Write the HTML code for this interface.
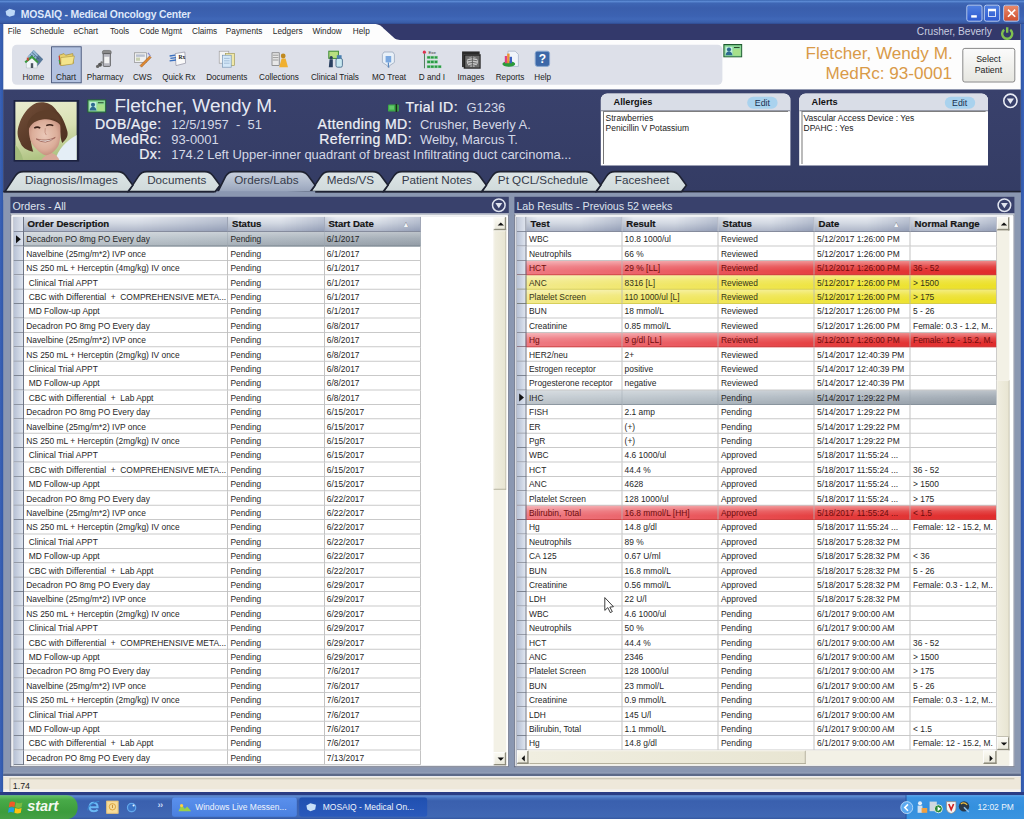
<!DOCTYPE html>
<html><head><meta charset="utf-8">
<style>
html,body{margin:0;padding:0;overflow:hidden;background:#8996b0;}
body{width:1024px;height:819px;position:relative;}
#root{position:absolute;left:0;top:0;width:1280px;height:1024px;transform:scale(0.8);transform-origin:0 0;font-family:"Liberation Sans",sans-serif;overflow:hidden;background:#8a97b1;}
.abs{position:absolute;}
/* title bar */
#title{left:0;top:0;width:1280px;height:30px;background:linear-gradient(#3a66b0 0px,#5a88d2 1.9px,#3e66b4 4px,#3a5eac 10px,#3c62b2 20px,#4068b8 24px,#3a5ea8 28px,#2e4a90 30px);}
#title .t{left:26px;top:10px;color:#dfe8fa;font-weight:bold;font-size:13px;letter-spacing:-0.25px;}
#lb{left:0;top:30px;width:4px;height:964px;background:linear-gradient(90deg,#3a62b8,#3058a8);}
#rb{left:1276px;top:30px;width:4px;height:964px;background:linear-gradient(90deg,#3058a8,#3a62b8);}
#bb{left:0;top:989.5px;width:1280px;height:4.5px;background:#2a3c84;}
.tbtn{top:6px;width:20px;height:21px;border:1px solid #cfe0ff;border-radius:3px;box-sizing:border-box;background:linear-gradient(#4f7fe0,#2e5ad0);}
#menu{left:4px;top:30px;width:1272px;height:82px;background:#fdfdfd;}
#menu .m{top:36px;font-size:10.3px;color:#2a2a2a;}
#toolbar{left:14.5px;top:55.5px;width:888px;height:50.5px;background:#dde0e9;border-radius:6px;}
.tl{position:absolute;top:90px;font-size:10.2px;color:#222;transform:translateX(-50%);white-space:nowrap;}
/* patient header */
#ph{left:4px;top:112px;width:1272px;height:128px;background:linear-gradient(#39416c,#343c64);}
.lbl{position:absolute;color:#eef0f6;font-size:17.6px;font-weight:normal;-webkit-text-stroke:0.3px #eef0f6;letter-spacing:0.5px;white-space:nowrap;}
.val{position:absolute;color:#d4d8e6;font-size:16.2px;white-space:nowrap;}
.box{position:absolute;background:#fff;border-radius:8px 8px 0 0;overflow:hidden;}
.box .hd{position:absolute;left:0;top:0;right:0;height:21px;background:#d9dde7;border-bottom:1px solid #6c7080;}
.box .ttl{position:absolute;left:16px;top:4px;font-weight:bold;font-size:11.5px;color:#111;}
.box .edit{position:absolute;top:4px;width:38px;height:15px;border-radius:8px;background:#a9d2ee;font-size:11px;color:#1a3050;text-align:center;line-height:15px;}
.box .in{position:absolute;left:3px;top:22px;right:3px;bottom:2px;border-left:1.5px solid #555;border-top:1.5px solid #666;font-size:10.6px;color:#222;line-height:13px;padding:1px 0 0 2px;}
/* tabs */
#tabs{left:0;top:205px;}
.tabt{position:absolute;top:217.4px;font-size:14.6px;color:#353b4a;white-space:nowrap;}
/* panels */
.phd{position:absolute;top:246px;height:21px;background:#39416c;}
.phd .pt{position:absolute;left:3px;top:4.4px;color:#dde1ee;font-size:13.4px;white-space:nowrap;}
.grid{position:absolute;top:267px;height:692px;background:#fff;border-top:2px solid #bfc4cc;border-left:1.25px solid #454c64;border-bottom:1.25px solid #454c64;border-right:1.25px solid #6a7288;box-sizing:border-box;}
.gin{position:absolute;top:270.5px;height:686px;overflow:hidden;background:#fff;box-shadow:-1px 0 0 #a4abb8;}
.ghd{position:absolute;left:0;top:0;height:19.5px;display:flex;}
.ghd .h{height:19.5px;flex:none;box-sizing:border-box;border-right:1px solid #8890a4;border-bottom:1px solid #6c7488;background:linear-gradient(90deg,rgba(40,60,100,0.10),rgba(255,255,255,0) 12%,rgba(255,255,255,0) 55%,rgba(40,60,110,0.20) 100%),linear-gradient(#e8ebf2,#d2d8e2 45%,#aeb6c8);font-weight:bold;font-size:12px;color:#141414;-webkit-text-stroke:0.25px #141414;padding-left:5px;line-height:19.5px;white-space:nowrap;position:relative;}
.ghd .rhh{width:13px;padding:0;border-right:1.5px solid #4c5468;background:linear-gradient(90deg,#c0c8d8,#dfe4ee);}
.rows{position:absolute;left:0;top:19.5px;}
.row{display:flex;height:18px;}
.row .rh{width:13px;height:18px;box-sizing:border-box;border-right:1.5px solid #4c5468;border-bottom:1px solid #606878;background:linear-gradient(90deg,#b6c0d4,#dfe5ef);position:relative;flex:none;}
.row .c{height:18px;box-sizing:border-box;border-right:1px solid #b4b4b4;border-bottom:1px solid #bcbcbc;font-size:10.5px;color:#262626;line-height:18px;padding-left:3px;white-space:pre;overflow:hidden;flex:none;}
.row.sel{background:linear-gradient(rgba(255,255,255,0.35),rgba(255,255,255,0.1) 45%,rgba(0,0,0,0.06) 100%),linear-gradient(90deg,#c4ccd2,#b4bec6 40%,#a2acb6 80%,#9aa4ae);}
.row.sel .c{background:transparent;border-bottom-color:#7a8690;border-right-color:rgba(150,160,170,0.5);}
.row.red{background:linear-gradient(rgba(255,255,255,0.45),rgba(255,255,255,0.12) 40%,rgba(255,255,255,0) 70%),linear-gradient(90deg,#ee7c84,#ea5a60 35%,#e43a3a 70%,#e02c2c);}
.row.red .c{background:transparent;color:#6e0c0c;border-bottom-color:#c84040;}
.row.yel{background:linear-gradient(rgba(255,255,255,0.4),rgba(255,255,255,0.1) 40%,rgba(255,255,255,0) 70%),linear-gradient(90deg,#f2ea90,#f0e660 35%,#eee43a 70%,#ece028);}
.row.yel .c{background:transparent;color:#34341a;border-bottom-color:#d0c850;}
.arr{position:absolute;left:3px;top:4px;width:0;height:0;border-top:5px solid transparent;border-bottom:5px solid transparent;border-left:6px solid #111;}
.vsb{position:absolute;width:16px;background:#f3f1e6;}
.sbtn{position:absolute;left:0;width:16px;height:17px;box-sizing:border-box;background:linear-gradient(#fbfaf3,#ebe9dc);border-top:1px solid #fff;border-left:1px solid #fff;border-right:2px solid #8e8c7c;border-bottom:2px solid #8e8c7c;}
.thumb{position:absolute;left:0;width:16px;box-sizing:border-box;background:linear-gradient(90deg,#f0eee0,#e8e5d2);border:1px solid #f4f2e8;border-right:1.5px solid #a6a28c;border-bottom:1.5px solid #a6a28c;}
#status{left:4px;top:970px;width:1272px;height:19.5px;background:linear-gradient(#eee8da 80%,#f4f2f0 85%);border-top:1px solid #fff;box-sizing:border-box;}
#taskbar{left:0;top:994px;width:1280px;height:30px;background:linear-gradient(#4a78c4 0,#5a88d0 1.5px,#4a74c0 3.5px,#3a60ae 7px,#3c62b0 50%,#4068b4 90%,#34569e 100%);}
</style></head><body>
<div id="root">
<!-- title bar -->
<div id="title" class="abs">
  <svg class="abs" style="left:6px;top:10px" width="14" height="12" viewBox="0 0 14 12"><path d="M1 4 L6 1 L13 3 L12 9 L6 11 L2 9 Z" fill="#bcd8f8"/></svg>
  <div class="abs t">MOSAIQ - Medical Oncology Center</div>
  <div class="abs tbtn" style="left:1207.5px;"><div class="abs" style="left:5px;top:12px;width:7px;height:3px;background:#fff"></div></div>
  <div class="abs tbtn" style="left:1230px;"><div class="abs" style="left:4px;top:4px;width:10px;height:10px;border:1px solid #fff;border-top:3px solid #fff;box-sizing:border-box"></div></div>
  <div class="abs tbtn" style="left:1253.5px;background:linear-gradient(#e88a6c,#d05030);"><svg class="abs" style="left:3px;top:3px" width="13" height="13"><path d="M2 2 L11 11 M11 2 L2 11" stroke="#fff" stroke-width="2"/></svg></div>
</div>
<div id="menu" class="abs">
  <svg class="abs" style="left:0;top:0" width="1272" height="20"><path d="M463 0 C 471 0, 473 3, 477 7 L 486 15 C 490 19, 492 20, 498 20 L1272 20 L1272 0 Z" fill="#33396b"/></svg>
  <div class="abs m" style="left:5.75px;top:3.6px">File</div>
  <div class="abs m" style="left:33.5px;top:3.6px">Schedule</div>
  <div class="abs m" style="left:87.75px;top:3.6px">eChart</div>
  <div class="abs m" style="left:133.5px;top:3.6px">Tools</div>
  <div class="abs m" style="left:170.4px;top:3.6px">Code Mgmt</div>
  <div class="abs m" style="left:236px;top:3.6px">Claims</div>
  <div class="abs m" style="left:278.25px;top:3.6px">Payments</div>
  <div class="abs m" style="left:337px;top:3.6px">Ledgers</div>
  <div class="abs m" style="left:386.6px;top:3.6px">Window</div>
  <div class="abs m" style="left:437px;top:3.6px">Help</div>
  <div class="abs" style="left:1142px;top:3.1px;font-size:12.7px;color:#c9cde0;">Crusher, Beverly</div>
  <svg class="abs" style="left:1246px;top:3px" width="18" height="17" viewBox="0 0 18 17"><path d="M5.2 4.2 A6.3 6.3 0 1 0 12.8 4.2" fill="none" stroke="#80c050" stroke-width="3"/><path d="M9 1 V8" stroke="#80c050" stroke-width="3"/></svg>
  <!-- right patient -->
  <div class="abs" style="left:1003px;top:25px;font-size:21.4px;color:#d99a48;white-space:nowrap">Fletcher, Wendy M.</div>
  <div class="abs" style="left:1028px;top:50px;font-size:21.4px;color:#d99a48;white-space:nowrap">MedRc: 93-0001</div>
  <div class="abs" style="left:1198.5px;top:30px;width:66px;height:43px;box-sizing:border-box;border:1px solid #6a6a6a;border-radius:3px;background:linear-gradient(#fbfbfb,#e6e6e0);font-size:11px;color:#222;text-align:center;line-height:13px;padding-top:7px">Select<br>Patient</div>
  <svg class="abs" style="left:900px;top:24.5px" width="24" height="17" viewBox="0 0 24 17"><rect x="0.75" y="0.75" width="22.5" height="15.5" fill="#8ad898" stroke="#1e5a30" stroke-width="1.5"/><rect x="3" y="3.5" width="8.5" height="10.5" fill="#c4f0dc"/><circle cx="7.25" cy="7" r="2.6" fill="#2e6a90"/><path d="M3 14 Q3.5 9.5 7.25 9.5 Q11 9.5 11.5 14 Z" fill="#2e6a90"/><rect x="12.5" y="6.5" width="9" height="8" fill="#a8e08a"/><path d="M13.5 4.5 H20.5" stroke="#2a4a2a" stroke-width="1.3"/></svg>
</div>
<div id="toolbar" class="abs">
<div class="abs" style="left:49.25px;top:2.3999999999999986px;width:38px;height:46px;box-sizing:border-box;background:#b3c2e0;border:1.5px solid #3d4a6c;"></div>
<svg class="abs" style="left:15.2px;top:6.0px" width="24" height="24" viewBox="0 0 24 24"><path d="M12 0.5 L24 12 L15 23 L4.5 9 Z" fill="#58789a"/><path d="M12 0.5 L4.5 9 L11 17 L17.5 7 Z" fill="#94b8d4"/><path d="M8 6 L15 13 M10 3.5 L19 12 M7 10 L11 7 M9 13 L14 8 M12 16 L17 11" stroke="#3a5a78" stroke-width="0.9"/><path d="M3 15.5 L10 10 L16.5 15.5 L16.5 23 L3 23 Z" fill="#f0f4f8" stroke="#9aa" stroke-width="0.5"/><path d="M1.5 16 L10 9 L17.5 16" fill="none" stroke="#3a9a40" stroke-width="2.6"/><rect x="3.5" y="10" width="2.5" height="4" fill="#c04a38"/><rect x="8.5" y="17" width="3" height="6" fill="#4a5560"/></svg>
<div class="tl" style="left:27.2px;top:35.5px">Home</div>
<svg class="abs" style="left:56.0px;top:6.0px" width="24" height="24" viewBox="0 0 24 24"><path d="M3 7 L9 5 L11 7 L20 5 L21 17 L5 20 Z" fill="#e8d070" stroke="#a08830" stroke-width="0.8"/><path d="M5 10 L22 8 L20 18 L5 20 Z" fill="#f4e48c" stroke="#b09a40" stroke-width="0.8"/><path d="M3 8 L4 19" stroke="#d04030" stroke-width="1.5"/><path d="M3 13 L4 18" stroke="#40a040" stroke-width="1.5"/></svg>
<div class="tl" style="left:68.0px;top:35.5px">Chart</div>
<svg class="abs" style="left:104.8px;top:6.0px" width="24" height="24" viewBox="0 0 24 24"><rect x="9" y="1" width="11" height="5" rx="2" fill="#8a8a8a" stroke="#444" stroke-width="0.6"/><rect x="10" y="5" width="9" height="16" rx="1" fill="#b8b8c0" stroke="#333" stroke-width="0.8"/><rect x="11.5" y="9" width="6" height="8" fill="#f4f4f4"/><circle cx="6" cy="19" r="2.5" fill="#555"/><circle cx="3" cy="21" r="2" fill="#666"/><circle cx="8" cy="16" r="1.5" fill="#777"/></svg>
<div class="tl" style="left:116.8px;top:35.5px">Pharmacy</div>
<svg class="abs" style="left:151.5px;top:6.0px" width="24" height="24" viewBox="0 0 24 24"><rect x="2" y="4" width="15" height="12" fill="#f0f0f0" stroke="#888" stroke-width="0.8"/><rect x="4" y="6" width="11" height="3" fill="#b8c0d0"/><rect x="4" y="10" width="5" height="4" fill="#c8d0b0"/><path d="M9 20 L21 8 L23 10 L11 22 Z" fill="#e08a30" stroke="#905020" stroke-width="0.6"/><path d="M19 4 L22 8" stroke="#8888cc" stroke-width="1.5"/></svg>
<div class="tl" style="left:163.5px;top:35.5px">CWS</div>
<svg class="abs" style="left:196.9px;top:6.0px" width="24" height="24" viewBox="0 0 24 24"><path d="M8 5 L20 3 L21 17 L9 20 Z" fill="#fafafa" stroke="#889" stroke-width="0.8"/><text x="12" y="12" font-size="7" font-family="Liberation Serif" font-weight="bold" fill="#222">Rx</text><path d="M1 8 L8 7 M2 11 L9 10 M1 14 L9 13" stroke="#3a70c0" stroke-width="1.6"/></svg>
<div class="tl" style="left:208.9px;top:35.5px">Quick Rx</div>
<svg class="abs" style="left:257.0px;top:6.0px" width="24" height="24" viewBox="0 0 24 24"><rect x="2" y="2" width="12" height="15" fill="#f4f4f4" stroke="#999" stroke-width="0.8"/><rect x="10" y="5" width="11" height="15" fill="#f0e8a8" stroke="#a09850" stroke-width="0.8"/><rect x="6" y="7" width="11" height="15" fill="#d4e8f8" stroke="#7090b0" stroke-width="0.8"/><path d="M8 11 H15 M8 14 H15 M8 17 H15" stroke="#8aa8c8" stroke-width="0.8"/></svg>
<div class="tl" style="left:269.0px;top:35.5px">Documents</div>
<svg class="abs" style="left:322.2px;top:6.0px" width="24" height="24" viewBox="0 0 24 24"><rect x="3" y="4" width="9" height="16" fill="#e8e8e8" stroke="#666" stroke-width="0.8"/><path d="M4 7 H11 M4 10 H11 M4 13 H11" stroke="#888" stroke-width="1"/><circle cx="17" cy="8" r="3" fill="#c08a20"/><path d="M12 22 L15 11 L20 11 L23 22 Z" fill="#f0b030"/></svg>
<div class="tl" style="left:334.2px;top:35.5px">Collections</div>
<svg class="abs" style="left:392.2px;top:6.0px" width="24" height="24" viewBox="0 0 24 24"><rect x="4" y="2" width="12" height="9" fill="#b8e080" stroke="#3a8a30" stroke-width="1.2"/><circle cx="7" cy="10" r="2" fill="#2a4060"/><path d="M5 12 L9 12 L9 22 L4 22 Z" fill="#2a4060"/><rect x="13" y="11" width="8" height="11" rx="2" fill="#c8e8f0" stroke="#3a6080" stroke-width="1"/><rect x="14" y="7" width="6" height="4" fill="#4a80b0"/></svg>
<div class="tl" style="left:404.2px;top:35.5px">Clinical Trials</div>
<svg class="abs" style="left:459.8px;top:6.0px" width="24" height="24" viewBox="0 0 24 24"><path d="M6 3 L17 3 L19 6 L19 16 L13 20 L12 23 L10 20 L4 16 L4 6 Z" fill="#e8f0f8" stroke="#8898b0" stroke-width="0.8"/><rect x="8" y="8" width="7" height="8" fill="#7aa8e0"/><path d="M11.5 16 V22" stroke="#5a88c0" stroke-width="1.5"/></svg>
<div class="tl" style="left:471.8px;top:35.5px">MO Treat</div>
<svg class="abs" style="left:513.5px;top:6.0px" width="24" height="24" viewBox="0 0 24 24"><circle cx="2.4" cy="3.2" r="2.1" fill="#e03050"/><text x="7.5" y="5.6" font-size="5.5" font-family="Liberation Sans" fill="#333">Exe</text><path d="M2.6 5 V23.5" stroke="#2a6a3a" stroke-width="1"/><rect x="5.8" y="8.1" width="4" height="3.4" fill="#2a9a44" stroke="#9ad8a8" stroke-width="0.5"/><rect x="10.4" y="8.1" width="4" height="3.4" fill="#2a9a44" stroke="#9ad8a8" stroke-width="0.5"/><rect x="15.0" y="8.1" width="4" height="3.4" fill="#2a9a44" stroke="#9ad8a8" stroke-width="0.5"/><rect x="5.8" y="13.6" width="4" height="3.4" fill="#2a9a44" stroke="#9ad8a8" stroke-width="0.5"/><rect x="10.4" y="13.6" width="4" height="3.4" fill="#2a9a44" stroke="#9ad8a8" stroke-width="0.5"/><rect x="15.0" y="13.6" width="4" height="3.4" fill="#2a9a44" stroke="#9ad8a8" stroke-width="0.5"/><rect x="5.8" y="19.6" width="4" height="3.4" fill="#2a9a44" stroke="#9ad8a8" stroke-width="0.5"/><rect x="10.4" y="19.6" width="4" height="3.4" fill="#2a9a44" stroke="#9ad8a8" stroke-width="0.5"/><rect x="15.0" y="19.6" width="4" height="3.4" fill="#2a9a44" stroke="#9ad8a8" stroke-width="0.5"/><rect x="19.6" y="19.6" width="4" height="3.4" fill="#2a9a44" stroke="#9ad8a8" stroke-width="0.5"/></svg>
<div class="tl" style="left:525.5px;top:35.5px">D and I</div>
<svg class="abs" style="left:562.2px;top:6.0px" width="24" height="24" viewBox="0 0 24 24"><rect x="0.6" y="2.3" width="22" height="19.6" fill="#2a2a2a"/><rect x="2.9" y="5.9" width="21" height="18.2" fill="#1a1a1a" stroke="#555" stroke-width="0.6"/><rect x="4.5" y="7.5" width="18" height="15" fill="#6a6a6a"/><ellipse cx="13.5" cy="15" rx="7" ry="6.5" fill="#c8c8c8"/><path d="M13.5 8 V22 M8 11 Q13.5 9 19 11 M7.5 14 Q13.5 12 19.5 14 M8 17 Q13.5 15 19 17 M9 20 Q13.5 18 18 20" stroke="#4a4a4a" stroke-width="0.9" fill="none"/></svg>
<div class="tl" style="left:574.2px;top:35.5px">Images</div>
<svg class="abs" style="left:611.0px;top:6.0px" width="24" height="24" viewBox="0 0 24 24"><path d="M9 2 L18 2 L22 6 L22 21 L9 21 Z" fill="#f0f4fa" stroke="#9aa8c0" stroke-width="0.8"/><ellipse cx="10" cy="18" rx="8" ry="3.5" fill="#2a9a3a"/><rect x="5" y="8" width="3" height="9" fill="#e04080"/><rect x="8" y="5" width="3" height="12" fill="#f09030"/><rect x="11" y="9" width="3" height="8" fill="#3a60c0"/></svg>
<div class="tl" style="left:623.0px;top:35.5px">Reports</div>
<svg class="abs" style="left:651.9px;top:6.0px" width="24" height="24" viewBox="0 0 24 24"><rect x="3" y="2" width="18" height="19" rx="3" fill="#3c68a8" stroke="#8aa8d0" stroke-width="1.2"/><text x="12" y="17" font-size="15" text-anchor="middle" font-family="Liberation Sans" font-weight="bold" fill="#fff">?</text></svg>
<div class="tl" style="left:663.9px;top:35.5px">Help</div>
</div>
<div id="lb" class="abs"></div><div id="rb" class="abs"></div>

<!-- patient header -->
<div id="ph" class="abs">
  <div class="abs" style="left:13px;top:12.5px;width:81.5px;height:77.5px;background:#1c2240;"></div>
  <svg class="abs" style="left:15px;top:15px" width="77" height="73" viewBox="0 0 61.5 59.4" preserveAspectRatio="none">
<defs><linearGradient id="bgp" x1="0" y1="0" x2="0.2" y2="1"><stop offset="0" stop-color="#eaeccf"/><stop offset="0.55" stop-color="#d8e0b4"/><stop offset="1" stop-color="#b0c484"/></linearGradient>
<radialGradient id="face" cx="0.5" cy="0.45" r="0.6"><stop offset="0" stop-color="#eac8b8"/><stop offset="0.65" stop-color="#dcae9a"/><stop offset="1" stop-color="#c08878"/></radialGradient>
<linearGradient id="hair" x1="0" y1="0" x2="1" y2="1"><stop offset="0" stop-color="#74503a"/><stop offset="0.5" stop-color="#5a3a28"/><stop offset="1" stop-color="#4a2e20"/></linearGradient></defs>
<rect width="61.5" height="59.4" fill="url(#bgp)"/>
<path d="M0 44 Q6 50 8 59.4 L0 59.4 Z" fill="#a4bc7c"/>
<path d="M40 59.4 Q44 44 61.5 34 L61.5 59.4 Z" fill="#e4eef6"/>
<path d="M26 59.4 Q30 54 36 52 Q42 54 44 59.4 Z" fill="#d8a898"/>
<path d="M21 1.3 C28 0 36 0.5 42 10 C46 14 49 19 52 30 C53 34 52 38 47 42 C45 38 45 30 44 24 L16 24 C14 34 16 44 18 51 C12 50 6 46 5 41 C2 36 1.5 30 4 23 C6 16 12 5 21 1.3 Z" fill="url(#hair)"/>
<path d="M14 22 C13 30 14 38 17 43 C21 49 27 54 31 54.5 C36 54 41 49 43 45 C45 40 45.5 32 45 24 C40 17 22 16 14 22 Z" fill="url(#face)"/>
<path d="M12 24 C14 14 24 8 34 9 C42 10 46 16 46 26 C44 20 40 17 36 17 C30 17.5 24 18 19 21 C16 23 14 26 13 30 Z" fill="#5e3e2a"/>
<path d="M19 27 Q22 25 25 27" stroke="#3a2018" stroke-width="1.6" fill="none"/>
<path d="M31 24.5 Q34.5 22.5 38 24.5" stroke="#3a2018" stroke-width="1.6" fill="none"/>
<path d="M30 27 Q29 32 31 34" stroke="#b88070" stroke-width="0.7" fill="none"/>
<path d="M21 38 Q30 45 40 36.5 Q31 41 21 38 Z" fill="#f8f4f0" stroke="#8a4a40" stroke-width="0.7"/>
</svg>
  <svg class="abs" style="left:105px;top:12px" width="24" height="17" viewBox="0 0 24 17"><rect x="0.75" y="0.75" width="22.5" height="15.5" fill="#8ad898" stroke="#1e5a30" stroke-width="1.5"/><rect x="3" y="3.5" width="8.5" height="10.5" fill="#c4f0dc"/><circle cx="7.25" cy="7" r="2.6" fill="#2e6a90"/><path d="M3 14 Q3.5 9.5 7.25 9.5 Q11 9.5 11.5 14 Z" fill="#2e6a90"/><rect x="12.5" y="6.5" width="9" height="8" fill="#a8e08a"/><path d="M13.5 4.5 H20.5" stroke="#2a4a2a" stroke-width="1.3"/></svg>
  <div class="abs" style="left:139px;top:7.3px;font-size:23.7px;color:#e6e9f3;white-space:nowrap">Fletcher, Wendy M.</div>
  <div class="lbl" style="right:1074px;top:33.4px">DOB/Age:</div>
  <div class="lbl" style="right:1074px;top:52px">MedRc:</div>
  <div class="lbl" style="right:1074px;top:71.4px">Dx:</div>
  <div class="val" style="left:210px;top:34.3px">12/5/1957&nbsp; - &nbsp;51</div>
  <div class="val" style="left:210px;top:52.9px">93-0001</div>
  <div class="val" style="left:210px;top:72.3px">174.2 Left Upper-inner quadrant of breast Infiltrating duct carcinoma...</div>
  <svg class="abs" style="left:481px;top:17.5px" width="14" height="10" viewBox="0 0 14 10"><rect x="0" y="0.5" width="13.5" height="9" rx="1.5" fill="#3eaa48"/><rect x="9.5" y="0" width="2" height="10" fill="#1a2a1a"/><rect x="1.5" y="2" width="6" height="5" fill="#62c86a"/></svg>
  <div class="lbl" style="left:503px;top:12.4px">Trial ID:</div>
  <div class="val" style="left:579px;top:13.3px">G1236</div>
  <div class="lbl" style="right:761px;top:33.4px">Attending MD:</div>
  <div class="lbl" style="right:761px;top:52.4px">Referring MD:</div>
  <div class="val" style="left:521px;top:34.3px">Crusher, Beverly A.</div>
  <div class="val" style="left:521px;top:53.3px">Welby, Marcus T.</div>

  <div class="box" style="left:747px;top:4.5px;width:236.5px;height:90px;">
    <div class="hd"></div><div class="ttl">Allergies</div><div class="edit" style="left:183px">Edit</div>
    <div class="in">Strawberries<br>Penicillin V Potassium</div>
  </div>
  <div class="box" style="left:994.5px;top:4.5px;width:236px;height:90px;">
    <div class="hd"></div><div class="ttl">Alerts</div><div class="edit" style="left:182px">Edit</div>
    <div class="in">Vascular Access Device : Yes<br>DPAHC : Yes</div>
  </div>
  <svg class="abs" style="left:1249px;top:4px" width="20" height="20" viewBox="0 0 20 20"><circle cx="10" cy="10" r="8.3" fill="#39416c" stroke="#e8ebf4" stroke-width="2"/><path d="M5.5 7 L14.5 7 L10 14 Z" fill="#e8ebf4"/></svg>
</div>

<!-- tabs -->
<svg class="abs" style="left:0;top:205px" width="1280" height="45" viewBox="0 0 1280 45"><defs><linearGradient id="tsel" x1="0" y1="0" x2="0" y2="1"><stop offset="0" stop-color="#c9d1de"/><stop offset="0.55" stop-color="#a9b4c8"/><stop offset="1" stop-color="#8b97b1"/></linearGradient><linearGradient id="tun" x1="0" y1="0" x2="0" y2="1"><stop offset="0" stop-color="#dde5e6"/><stop offset="1" stop-color="#d0dadb"/></linearGradient></defs>
<rect x="4" y="34.5" width="1272" height="10.5" fill="#8a97b1"/><rect x="4" y="33.5" width="1272" height="2" fill="#1e2232"/>
<path d="M745.5,34.5 L758.0,15.5 Q761.5,9.5 768.5,9.5 L839,9.5 Q845.5,9.5 849,14.5 L858,26.5 L852,34.5 Z" fill="url(#tun)" stroke="#1e2232" stroke-width="2"/>
<path d="M602.5,34.5 L615.0,15.5 Q618.5,9.5 625.5,9.5 L732,9.5 Q738.5,9.5 742,14.5 L751,26.5 L745,34.5 Z" fill="url(#tun)" stroke="#1e2232" stroke-width="2"/>
<path d="M479.5,34.5 L492.0,15.5 Q495.5,9.5 502.5,9.5 L589,9.5 Q595.5,9.5 599,14.5 L608,26.5 L602,34.5 Z" fill="url(#tun)" stroke="#1e2232" stroke-width="2"/>
<path d="M388.5,34.5 L401.0,15.5 Q404.5,9.5 411.5,9.5 L466,9.5 Q472.5,9.5 476,14.5 L485,26.5 L479,34.5 Z" fill="url(#tun)" stroke="#1e2232" stroke-width="2"/>
<path d="M269.5,40.5 L282.0,15.5 Q285.5,9.5 292.5,9.5 L375,9.5 Q381.5,9.5 385,14.5 L394,26.5 L388,34.5 Z" fill="url(#tsel)" stroke="#1e2232" stroke-width="2"/>
<rect x="267.5" y="34" width="126.5" height="8" fill="#8b97b1"/>
<path d="M160.5,34.5 L173.0,15.5 Q176.5,9.5 183.5,9.5 L256,9.5 Q262.5,9.5 266,14.5 L275,26.5 L269,34.5 Z" fill="url(#tun)" stroke="#1e2232" stroke-width="2"/>
<path d="M6.25,34.5 L18.75,15.5 Q22.25,9.5 29.25,9.5 L147,9.5 Q153.5,9.5 157,14.5 L166,26.5 L160,34.5 Z" fill="url(#tun)" stroke="#1e2232" stroke-width="2"/>
</svg>
<div class="tabt" style="left:89.4px;transform:translateX(-50%)">Diagnosis/Images</div>
<div class="tabt" style="left:220.9px;transform:translateX(-50%)">Documents</div>
<div class="tabt" style="left:333px;transform:translateX(-50%)">Orders/Labs</div>
<div class="tabt" style="left:438px;transform:translateX(-50%)">Meds/VS</div>
<div class="tabt" style="left:546px;transform:translateX(-50%)">Patient Notes</div>
<div class="tabt" style="left:678.7px;transform:translateX(-50%)">Pt QCL/Schedule</div>
<div class="tabt" style="left:802.6px;transform:translateX(-50%)">Facesheet</div>

<!-- orders panel -->
<div class="phd" style="left:12.5px;width:623.5px">
  <div class="pt">Orders - All</div>
  <svg class="abs" style="left:601px;top:1px" width="19" height="19" viewBox="0 0 20 20"><circle cx="10" cy="10" r="8.3" fill="#39416c" stroke="#dfe3ee" stroke-width="2"/><path d="M5.5 7 L14.5 7 L10 14 Z" fill="#dfe3ee"/></svg>
</div>
<div class="grid" style="left:12.5px;width:623.5px"></div>
<div class="gin" style="left:16.5px;width:616px">
    <div class="ghd"><div class="h rhh"></div><div class="h" style="width:255.5px">Order Description</div><div class="h" style="width:120.5px">Status</div><div class="h" style="width:120px">Start Date<span style="position:absolute;right:12px;top:0;color:#f4f6fa;font-size:10px">&#9650;</span></div></div>
    <div class="rows">
<div class="row sel"><div class="rh"><span class="arr"></span></div><div class="c" style="width:255.5px;padding-left:0"><span style="padding-left:3.2px">Decadron PO 8mg PO Every day</span></div><div class="c" style="width:120.5px">Pending</div><div class="c" style="width:120px">6/1/2017</div></div>
<div class="row"><div class="rh"></div><div class="c" style="width:255.5px;padding-left:0"><span style="padding-left:3.2px">Navelbine (25mg/m*2) IVP once</span></div><div class="c" style="width:120.5px">Pending</div><div class="c" style="width:120px">6/1/2017</div></div>
<div class="row"><div class="rh"></div><div class="c" style="width:255.5px;padding-left:0"><span style="padding-left:3.2px">NS 250 mL + Herceptin (4mg/kg) IV once</span></div><div class="c" style="width:120.5px">Pending</div><div class="c" style="width:120px">6/1/2017</div></div>
<div class="row"><div class="rh"></div><div class="c" style="width:255.5px;padding-left:0"><span style="padding-left:6.4px">Clinical Trial APPT</span></div><div class="c" style="width:120.5px">Pending</div><div class="c" style="width:120px">6/1/2017</div></div>
<div class="row"><div class="rh"></div><div class="c" style="width:255.5px;padding-left:0"><span style="padding-left:6.4px">CBC with Differential  +  COMPREHENSIVE META...</span></div><div class="c" style="width:120.5px">Pending</div><div class="c" style="width:120px">6/1/2017</div></div>
<div class="row"><div class="rh"></div><div class="c" style="width:255.5px;padding-left:0"><span style="padding-left:6.4px">MD Follow-up Appt</span></div><div class="c" style="width:120.5px">Pending</div><div class="c" style="width:120px">6/1/2017</div></div>
<div class="row"><div class="rh"></div><div class="c" style="width:255.5px;padding-left:0"><span style="padding-left:3.2px">Decadron PO 8mg PO Every day</span></div><div class="c" style="width:120.5px">Pending</div><div class="c" style="width:120px">6/8/2017</div></div>
<div class="row"><div class="rh"></div><div class="c" style="width:255.5px;padding-left:0"><span style="padding-left:3.2px">Navelbine (25mg/m*2) IVP once</span></div><div class="c" style="width:120.5px">Pending</div><div class="c" style="width:120px">6/8/2017</div></div>
<div class="row"><div class="rh"></div><div class="c" style="width:255.5px;padding-left:0"><span style="padding-left:3.2px">NS 250 mL + Herceptin (2mg/kg) IV once</span></div><div class="c" style="width:120.5px">Pending</div><div class="c" style="width:120px">6/8/2017</div></div>
<div class="row"><div class="rh"></div><div class="c" style="width:255.5px;padding-left:0"><span style="padding-left:6.4px">Clinical Trial APPT</span></div><div class="c" style="width:120.5px">Pending</div><div class="c" style="width:120px">6/8/2017</div></div>
<div class="row"><div class="rh"></div><div class="c" style="width:255.5px;padding-left:0"><span style="padding-left:6.4px">MD Follow-up Appt</span></div><div class="c" style="width:120.5px">Pending</div><div class="c" style="width:120px">6/8/2017</div></div>
<div class="row"><div class="rh"></div><div class="c" style="width:255.5px;padding-left:0"><span style="padding-left:6.4px">CBC with Differential  +  Lab Appt</span></div><div class="c" style="width:120.5px">Pending</div><div class="c" style="width:120px">6/8/2017</div></div>
<div class="row"><div class="rh"></div><div class="c" style="width:255.5px;padding-left:0"><span style="padding-left:3.2px">Decadron PO 8mg PO Every day</span></div><div class="c" style="width:120.5px">Pending</div><div class="c" style="width:120px">6/15/2017</div></div>
<div class="row"><div class="rh"></div><div class="c" style="width:255.5px;padding-left:0"><span style="padding-left:3.2px">Navelbine (25mg/m*2) IVP once</span></div><div class="c" style="width:120.5px">Pending</div><div class="c" style="width:120px">6/15/2017</div></div>
<div class="row"><div class="rh"></div><div class="c" style="width:255.5px;padding-left:0"><span style="padding-left:3.2px">NS 250 mL + Herceptin (2mg/kg) IV once</span></div><div class="c" style="width:120.5px">Pending</div><div class="c" style="width:120px">6/15/2017</div></div>
<div class="row"><div class="rh"></div><div class="c" style="width:255.5px;padding-left:0"><span style="padding-left:6.4px">Clinical Trial APPT</span></div><div class="c" style="width:120.5px">Pending</div><div class="c" style="width:120px">6/15/2017</div></div>
<div class="row"><div class="rh"></div><div class="c" style="width:255.5px;padding-left:0"><span style="padding-left:6.4px">CBC with Differential  +  COMPREHENSIVE META...</span></div><div class="c" style="width:120.5px">Pending</div><div class="c" style="width:120px">6/15/2017</div></div>
<div class="row"><div class="rh"></div><div class="c" style="width:255.5px;padding-left:0"><span style="padding-left:6.4px">MD Follow-up Appt</span></div><div class="c" style="width:120.5px">Pending</div><div class="c" style="width:120px">6/15/2017</div></div>
<div class="row"><div class="rh"></div><div class="c" style="width:255.5px;padding-left:0"><span style="padding-left:3.2px">Decadron PO 8mg PO Every day</span></div><div class="c" style="width:120.5px">Pending</div><div class="c" style="width:120px">6/22/2017</div></div>
<div class="row"><div class="rh"></div><div class="c" style="width:255.5px;padding-left:0"><span style="padding-left:3.2px">Navelbine (25mg/m*2) IVP once</span></div><div class="c" style="width:120.5px">Pending</div><div class="c" style="width:120px">6/22/2017</div></div>
<div class="row"><div class="rh"></div><div class="c" style="width:255.5px;padding-left:0"><span style="padding-left:3.2px">NS 250 mL + Herceptin (2mg/kg) IV once</span></div><div class="c" style="width:120.5px">Pending</div><div class="c" style="width:120px">6/22/2017</div></div>
<div class="row"><div class="rh"></div><div class="c" style="width:255.5px;padding-left:0"><span style="padding-left:6.4px">Clinical Trial APPT</span></div><div class="c" style="width:120.5px">Pending</div><div class="c" style="width:120px">6/22/2017</div></div>
<div class="row"><div class="rh"></div><div class="c" style="width:255.5px;padding-left:0"><span style="padding-left:6.4px">MD Follow-up Appt</span></div><div class="c" style="width:120.5px">Pending</div><div class="c" style="width:120px">6/22/2017</div></div>
<div class="row"><div class="rh"></div><div class="c" style="width:255.5px;padding-left:0"><span style="padding-left:6.4px">CBC with Differential  +  Lab Appt</span></div><div class="c" style="width:120.5px">Pending</div><div class="c" style="width:120px">6/22/2017</div></div>
<div class="row"><div class="rh"></div><div class="c" style="width:255.5px;padding-left:0"><span style="padding-left:3.2px">Decadron PO 8mg PO Every day</span></div><div class="c" style="width:120.5px">Pending</div><div class="c" style="width:120px">6/29/2017</div></div>
<div class="row"><div class="rh"></div><div class="c" style="width:255.5px;padding-left:0"><span style="padding-left:3.2px">Navelbine (25mg/m*2) IVP once</span></div><div class="c" style="width:120.5px">Pending</div><div class="c" style="width:120px">6/29/2017</div></div>
<div class="row"><div class="rh"></div><div class="c" style="width:255.5px;padding-left:0"><span style="padding-left:3.2px">NS 250 mL + Herceptin (2mg/kg) IV once</span></div><div class="c" style="width:120.5px">Pending</div><div class="c" style="width:120px">6/29/2017</div></div>
<div class="row"><div class="rh"></div><div class="c" style="width:255.5px;padding-left:0"><span style="padding-left:6.4px">Clinical Trial APPT</span></div><div class="c" style="width:120.5px">Pending</div><div class="c" style="width:120px">6/29/2017</div></div>
<div class="row"><div class="rh"></div><div class="c" style="width:255.5px;padding-left:0"><span style="padding-left:6.4px">CBC with Differential  +  COMPREHENSIVE META...</span></div><div class="c" style="width:120.5px">Pending</div><div class="c" style="width:120px">6/29/2017</div></div>
<div class="row"><div class="rh"></div><div class="c" style="width:255.5px;padding-left:0"><span style="padding-left:6.4px">MD Follow-up Appt</span></div><div class="c" style="width:120.5px">Pending</div><div class="c" style="width:120px">6/29/2017</div></div>
<div class="row"><div class="rh"></div><div class="c" style="width:255.5px;padding-left:0"><span style="padding-left:3.2px">Decadron PO 8mg PO Every day</span></div><div class="c" style="width:120.5px">Pending</div><div class="c" style="width:120px">7/6/2017</div></div>
<div class="row"><div class="rh"></div><div class="c" style="width:255.5px;padding-left:0"><span style="padding-left:3.2px">Navelbine (25mg/m*2) IVP once</span></div><div class="c" style="width:120.5px">Pending</div><div class="c" style="width:120px">7/6/2017</div></div>
<div class="row"><div class="rh"></div><div class="c" style="width:255.5px;padding-left:0"><span style="padding-left:3.2px">NS 250 mL + Herceptin (2mg/kg) IV once</span></div><div class="c" style="width:120.5px">Pending</div><div class="c" style="width:120px">7/6/2017</div></div>
<div class="row"><div class="rh"></div><div class="c" style="width:255.5px;padding-left:0"><span style="padding-left:6.4px">Clinical Trial APPT</span></div><div class="c" style="width:120.5px">Pending</div><div class="c" style="width:120px">7/6/2017</div></div>
<div class="row"><div class="rh"></div><div class="c" style="width:255.5px;padding-left:0"><span style="padding-left:6.4px">MD Follow-up Appt</span></div><div class="c" style="width:120.5px">Pending</div><div class="c" style="width:120px">7/6/2017</div></div>
<div class="row"><div class="rh"></div><div class="c" style="width:255.5px;padding-left:0"><span style="padding-left:6.4px">CBC with Differential  +  Lab Appt</span></div><div class="c" style="width:120.5px">Pending</div><div class="c" style="width:120px">7/6/2017</div></div>
<div class="row"><div class="rh"></div><div class="c" style="width:255.5px;padding-left:0"><span style="padding-left:3.2px">Decadron PO 8mg PO Every day</span></div><div class="c" style="width:120.5px">Pending</div><div class="c" style="width:120px">7/13/2017</div></div>
    </div>
    <div class="vsb" style="left:600px;top:0;height:686px;">
      <div class="sbtn" style="top:0"><div class="abs" style="left:4px;top:6px;border-left:4px solid transparent;border-right:4px solid transparent;border-bottom:4px solid #111"></div></div>
      <div class="thumb" style="top:17px;height:324px"></div>
      <div class="sbtn" style="top:669px"><div class="abs" style="left:4px;top:6px;border-left:4px solid transparent;border-right:4px solid transparent;border-top:4px solid #111"></div></div>
    </div>
</div>

<!-- lab panel -->
<div class="phd" style="left:642.5px;width:625.5px">
  <div class="pt">Lab Results - Previous 52 weeks</div>
  <svg class="abs" style="left:603px;top:1px" width="19" height="19" viewBox="0 0 20 20"><circle cx="10" cy="10" r="8.3" fill="#39416c" stroke="#dfe3ee" stroke-width="2"/><path d="M5.5 7 L14.5 7 L10 14 Z" fill="#dfe3ee"/></svg>
</div>
<div class="grid" style="left:642.5px;width:625.5px"></div>
<div class="gin" style="left:645.75px;width:616.5px">
    <div class="ghd"><div class="h rhh" style="width:12.5px"></div><div class="h" style="width:119.5px">Test</div><div class="h" style="width:120.5px">Result</div><div class="h" style="width:120px">Status</div><div class="h" style="width:120px">Date<span style="position:absolute;right:12px;top:0;color:#f4f6fa;font-size:10px">&#9650;</span></div><div class="h" style="width:108px">Normal Range</div></div>
    <div class="rows">
<div class="row"><div class="rh" style="width:12.5px"></div><div class="c" style="width:119.5px">WBC</div><div class="c" style="width:120.5px">10.8 1000/ul</div><div class="c" style="width:120px">Reviewed</div><div class="c" style="width:120px">5/12/2017 1:26:00 PM</div><div class="c" style="width:108px"></div></div>
<div class="row"><div class="rh" style="width:12.5px"></div><div class="c" style="width:119.5px">Neutrophils</div><div class="c" style="width:120.5px">66 %</div><div class="c" style="width:120px">Reviewed</div><div class="c" style="width:120px">5/12/2017 1:26:00 PM</div><div class="c" style="width:108px"></div></div>
<div class="row red"><div class="rh" style="width:12.5px"></div><div class="c" style="width:119.5px">HCT</div><div class="c" style="width:120.5px">29 % [LL]</div><div class="c" style="width:120px">Reviewed</div><div class="c" style="width:120px">5/12/2017 1:26:00 PM</div><div class="c" style="width:108px">36 - 52</div></div>
<div class="row yel"><div class="rh" style="width:12.5px"></div><div class="c" style="width:119.5px">ANC</div><div class="c" style="width:120.5px">8316 [L]</div><div class="c" style="width:120px">Reviewed</div><div class="c" style="width:120px">5/12/2017 1:26:00 PM</div><div class="c" style="width:108px">&gt; 1500</div></div>
<div class="row yel"><div class="rh" style="width:12.5px"></div><div class="c" style="width:119.5px">Platelet Screen</div><div class="c" style="width:120.5px">110 1000/ul [L]</div><div class="c" style="width:120px">Reviewed</div><div class="c" style="width:120px">5/12/2017 1:26:00 PM</div><div class="c" style="width:108px">&gt; 175</div></div>
<div class="row"><div class="rh" style="width:12.5px"></div><div class="c" style="width:119.5px">BUN</div><div class="c" style="width:120.5px">18 mmol/L</div><div class="c" style="width:120px">Reviewed</div><div class="c" style="width:120px">5/12/2017 1:26:00 PM</div><div class="c" style="width:108px">5 - 26</div></div>
<div class="row"><div class="rh" style="width:12.5px"></div><div class="c" style="width:119.5px">Creatinine</div><div class="c" style="width:120.5px">0.85 mmol/L</div><div class="c" style="width:120px">Reviewed</div><div class="c" style="width:120px">5/12/2017 1:26:00 PM</div><div class="c" style="width:108px">Female: 0.3 - 1.2, M..</div></div>
<div class="row red"><div class="rh" style="width:12.5px"></div><div class="c" style="width:119.5px">Hg</div><div class="c" style="width:120.5px">9 g/dl [LL]</div><div class="c" style="width:120px">Reviewed</div><div class="c" style="width:120px">5/12/2017 1:26:00 PM</div><div class="c" style="width:108px">Female: 12 - 15.2, M.</div></div>
<div class="row"><div class="rh" style="width:12.5px"></div><div class="c" style="width:119.5px">HER2/neu</div><div class="c" style="width:120.5px">2+</div><div class="c" style="width:120px">Reviewed</div><div class="c" style="width:120px">5/14/2017 12:40:39 PM</div><div class="c" style="width:108px"></div></div>
<div class="row"><div class="rh" style="width:12.5px"></div><div class="c" style="width:119.5px">Estrogen receptor</div><div class="c" style="width:120.5px">positive</div><div class="c" style="width:120px">Reviewed</div><div class="c" style="width:120px">5/14/2017 12:40:39 PM</div><div class="c" style="width:108px"></div></div>
<div class="row"><div class="rh" style="width:12.5px"></div><div class="c" style="width:119.5px">Progesterone receptor</div><div class="c" style="width:120.5px">negative</div><div class="c" style="width:120px">Reviewed</div><div class="c" style="width:120px">5/14/2017 12:40:39 PM</div><div class="c" style="width:108px"></div></div>
<div class="row sel"><div class="rh" style="width:12.5px"><span class="arr"></span></div><div class="c" style="width:119.5px">IHC</div><div class="c" style="width:120.5px"></div><div class="c" style="width:120px">Pending</div><div class="c" style="width:120px">5/14/2017 1:29:22 PM</div><div class="c" style="width:108px"></div></div>
<div class="row"><div class="rh" style="width:12.5px"></div><div class="c" style="width:119.5px">FISH</div><div class="c" style="width:120.5px">2.1 amp</div><div class="c" style="width:120px">Pending</div><div class="c" style="width:120px">5/14/2017 1:29:22 PM</div><div class="c" style="width:108px"></div></div>
<div class="row"><div class="rh" style="width:12.5px"></div><div class="c" style="width:119.5px">ER</div><div class="c" style="width:120.5px">(+)</div><div class="c" style="width:120px">Pending</div><div class="c" style="width:120px">5/14/2017 1:29:22 PM</div><div class="c" style="width:108px"></div></div>
<div class="row"><div class="rh" style="width:12.5px"></div><div class="c" style="width:119.5px">PgR</div><div class="c" style="width:120.5px">(+)</div><div class="c" style="width:120px">Pending</div><div class="c" style="width:120px">5/14/2017 1:29:22 PM</div><div class="c" style="width:108px"></div></div>
<div class="row"><div class="rh" style="width:12.5px"></div><div class="c" style="width:119.5px">WBC</div><div class="c" style="width:120.5px">4.6 1000/ul</div><div class="c" style="width:120px">Approved</div><div class="c" style="width:120px">5/18/2017 11:55:24 ...</div><div class="c" style="width:108px"></div></div>
<div class="row"><div class="rh" style="width:12.5px"></div><div class="c" style="width:119.5px">HCT</div><div class="c" style="width:120.5px">44.4 %</div><div class="c" style="width:120px">Approved</div><div class="c" style="width:120px">5/18/2017 11:55:24 ...</div><div class="c" style="width:108px">36 - 52</div></div>
<div class="row"><div class="rh" style="width:12.5px"></div><div class="c" style="width:119.5px">ANC</div><div class="c" style="width:120.5px">4628</div><div class="c" style="width:120px">Approved</div><div class="c" style="width:120px">5/18/2017 11:55:24 ...</div><div class="c" style="width:108px">&gt; 1500</div></div>
<div class="row"><div class="rh" style="width:12.5px"></div><div class="c" style="width:119.5px">Platelet Screen</div><div class="c" style="width:120.5px">128 1000/ul</div><div class="c" style="width:120px">Approved</div><div class="c" style="width:120px">5/18/2017 11:55:24 ...</div><div class="c" style="width:108px">&gt; 175</div></div>
<div class="row red"><div class="rh" style="width:12.5px"></div><div class="c" style="width:119.5px">Bilirubin, Total</div><div class="c" style="width:120.5px">16.8 mmol/L [HH]</div><div class="c" style="width:120px">Approved</div><div class="c" style="width:120px">5/18/2017 11:55:24 ...</div><div class="c" style="width:108px">&lt; 1.5</div></div>
<div class="row"><div class="rh" style="width:12.5px"></div><div class="c" style="width:119.5px">Hg</div><div class="c" style="width:120.5px">14.8 g/dl</div><div class="c" style="width:120px">Approved</div><div class="c" style="width:120px">5/18/2017 11:55:24 ...</div><div class="c" style="width:108px">Female: 12 - 15.2, M.</div></div>
<div class="row"><div class="rh" style="width:12.5px"></div><div class="c" style="width:119.5px">Neutrophils</div><div class="c" style="width:120.5px">89 %</div><div class="c" style="width:120px">Approved</div><div class="c" style="width:120px">5/18/2017 5:28:32 PM</div><div class="c" style="width:108px"></div></div>
<div class="row"><div class="rh" style="width:12.5px"></div><div class="c" style="width:119.5px">CA 125</div><div class="c" style="width:120.5px">0.67 U/ml</div><div class="c" style="width:120px">Approved</div><div class="c" style="width:120px">5/18/2017 5:28:32 PM</div><div class="c" style="width:108px">&lt; 36</div></div>
<div class="row"><div class="rh" style="width:12.5px"></div><div class="c" style="width:119.5px">BUN</div><div class="c" style="width:120.5px">16.8 mmol/L</div><div class="c" style="width:120px">Approved</div><div class="c" style="width:120px">5/18/2017 5:28:32 PM</div><div class="c" style="width:108px">5 - 26</div></div>
<div class="row"><div class="rh" style="width:12.5px"></div><div class="c" style="width:119.5px">Creatinine</div><div class="c" style="width:120.5px">0.56 mmol/L</div><div class="c" style="width:120px">Approved</div><div class="c" style="width:120px">5/18/2017 5:28:32 PM</div><div class="c" style="width:108px">Female: 0.3 - 1.2, M..</div></div>
<div class="row"><div class="rh" style="width:12.5px"></div><div class="c" style="width:119.5px">LDH</div><div class="c" style="width:120.5px">22 U/l</div><div class="c" style="width:120px">Approved</div><div class="c" style="width:120px">5/18/2017 5:28:32 PM</div><div class="c" style="width:108px"></div></div>
<div class="row"><div class="rh" style="width:12.5px"></div><div class="c" style="width:119.5px">WBC</div><div class="c" style="width:120.5px">4.6 1000/ul</div><div class="c" style="width:120px">Pending</div><div class="c" style="width:120px">6/1/2017 9:00:00 AM</div><div class="c" style="width:108px"></div></div>
<div class="row"><div class="rh" style="width:12.5px"></div><div class="c" style="width:119.5px">Neutrophils</div><div class="c" style="width:120.5px">50 %</div><div class="c" style="width:120px">Pending</div><div class="c" style="width:120px">6/1/2017 9:00:00 AM</div><div class="c" style="width:108px"></div></div>
<div class="row"><div class="rh" style="width:12.5px"></div><div class="c" style="width:119.5px">HCT</div><div class="c" style="width:120.5px">44.4 %</div><div class="c" style="width:120px">Pending</div><div class="c" style="width:120px">6/1/2017 9:00:00 AM</div><div class="c" style="width:108px">36 - 52</div></div>
<div class="row"><div class="rh" style="width:12.5px"></div><div class="c" style="width:119.5px">ANC</div><div class="c" style="width:120.5px">2346</div><div class="c" style="width:120px">Pending</div><div class="c" style="width:120px">6/1/2017 9:00:00 AM</div><div class="c" style="width:108px">&gt; 1500</div></div>
<div class="row"><div class="rh" style="width:12.5px"></div><div class="c" style="width:119.5px">Platelet Screen</div><div class="c" style="width:120.5px">128 1000/ul</div><div class="c" style="width:120px">Pending</div><div class="c" style="width:120px">6/1/2017 9:00:00 AM</div><div class="c" style="width:108px">&gt; 175</div></div>
<div class="row"><div class="rh" style="width:12.5px"></div><div class="c" style="width:119.5px">BUN</div><div class="c" style="width:120.5px">23 mmol/L</div><div class="c" style="width:120px">Pending</div><div class="c" style="width:120px">6/1/2017 9:00:00 AM</div><div class="c" style="width:108px">5 - 26</div></div>
<div class="row"><div class="rh" style="width:12.5px"></div><div class="c" style="width:119.5px">Creatinine</div><div class="c" style="width:120.5px">0.9 mmol/L</div><div class="c" style="width:120px">Pending</div><div class="c" style="width:120px">6/1/2017 9:00:00 AM</div><div class="c" style="width:108px">Female: 0.3 - 1.2, M..</div></div>
<div class="row"><div class="rh" style="width:12.5px"></div><div class="c" style="width:119.5px">LDH</div><div class="c" style="width:120.5px">145 U/l</div><div class="c" style="width:120px">Pending</div><div class="c" style="width:120px">6/1/2017 9:00:00 AM</div><div class="c" style="width:108px"></div></div>
<div class="row"><div class="rh" style="width:12.5px"></div><div class="c" style="width:119.5px">Bilirubin, Total</div><div class="c" style="width:120.5px">1.1 mmol/L</div><div class="c" style="width:120px">Pending</div><div class="c" style="width:120px">6/1/2017 9:00:00 AM</div><div class="c" style="width:108px">&lt; 1.5</div></div>
<div class="row"><div class="rh" style="width:12.5px"></div><div class="c" style="width:119.5px">Hg</div><div class="c" style="width:120.5px">14.8 g/dl</div><div class="c" style="width:120px">Pending</div><div class="c" style="width:120px">6/1/2017 9:00:00 AM</div><div class="c" style="width:108px">Female: 12 - 15.2, M.</div></div>
    </div>
    <div class="vsb" style="left:600.5px;top:0;height:667.5px;">
      <div class="sbtn" style="top:0"><div class="abs" style="left:4px;top:6px;border-left:4px solid transparent;border-right:4px solid transparent;border-bottom:4px solid #111"></div></div>
      <div class="thumb" style="top:204px;height:446px"></div>
      <div class="sbtn" style="top:650.5px"><div class="abs" style="left:4px;top:6px;border-left:4px solid transparent;border-right:4px solid transparent;border-top:4px solid #111"></div></div>
    </div>
    <div class="abs" style="left:0;top:667.5px;width:600.5px;height:18.5px;background:#f3f1e6">
      <div class="sbtn" style="left:0;top:0;width:15.5px;height:17px"><div class="abs" style="left:5px;top:4.5px;border-top:4px solid transparent;border-bottom:4px solid transparent;border-right:4px solid #111"></div></div>
      <div class="thumb" style="left:15.5px;top:0;width:346px;height:17px"></div>
      <div class="sbtn" style="left:583px;top:0;width:17.5px;height:17px"><div class="abs" style="left:7px;top:4.5px;border-top:4px solid transparent;border-bottom:4px solid transparent;border-left:4px solid #111"></div></div>
    </div>
    <div class="abs" style="left:600.5px;top:667.5px;width:16px;height:18.5px;background:#f3f1e6"></div>
</div>

<svg class="abs" style="left:754.5px;top:746px" width="14" height="22" viewBox="-1 -1 14 22"><path d="M0 0 L0 16 L3.75 12.5 L6.9 18.75 L9.4 17.5 L6.25 11.9 L10.8 11.4 Z" fill="#fff" stroke="#222" stroke-width="1.1" stroke-linejoin="miter"/></svg>
<div class="abs" style="left:4px;top:966px;width:1272px;height:1px;background:#a8b2c8"></div><div class="abs" style="left:4px;top:967px;width:1272px;height:3px;background:#5d6a88"></div>
<div id="status" class="abs">
  <div class="abs" style="left:8px;top:2px;width:1255px;height:15px;border-left:1px solid #b8b4a0;border-top:1px solid #b8b4a0;"></div>
  <div class="abs" style="left:12px;top:5px;font-size:11px;color:#222">1.74</div>
</div>
<div id="bb" class="abs"></div>
<div id="taskbar" class="abs">

<div class="abs" style="left:0;top:0;width:97px;height:30px;border-radius:0 14px 14px 0;background:linear-gradient(#6ac46a 0,#48aa48 20%,#3c9c3c 70%,#46a046 100%);"></div>
<svg class="abs" style="left:10px;top:6px" width="20" height="19" viewBox="0 0 20 19"><path d="M2 3 Q5 1 9 3 L8 9 Q5 7 1 9 Z" fill="#f05a28"/><path d="M10 3 Q14 5 18 3 L17 9 Q13 11 9 9 Z" fill="#7cbb42"/><path d="M1 10 Q5 8 8 10 L7 16 Q4 14 0 16 Z" fill="#1ea0e0"/><path d="M9 10 Q13 12 17 10 L16 16 Q12 18 8 16 Z" fill="#ffc20e"/></svg>
<div class="abs" style="left:34px;top:4px;font-size:18px;font-style:italic;font-weight:bold;color:#f4f8f0;">start</div>
<svg class="abs" style="left:109px;top:6px" width="16" height="16" viewBox="0 0 16 16"><path d="M3 9 H13 Q13 3.5 8 3.5 Q3 3.5 3 9 Q3 14 8.5 14 Q11.5 14 13 12" fill="none" stroke="#6ab8f4" stroke-width="2.6"/><path d="M1 13 Q0 9 6 5 Q12 1 15 2" fill="none" stroke="#3a88d0" stroke-width="1.3"/></svg>
<div class="abs" style="left:132.5px;top:7px;width:15px;height:15.5px;background:#f6dc9a;box-sizing:border-box;border:1px solid #e8c070"><div class="abs" style="left:2px;top:2px;width:9px;height:9px;border-radius:50%;border:1.5px solid #d89a28;box-sizing:border-box"></div><div class="abs" style="left:6px;top:4px;width:1.2px;height:3.5px;background:#c08020"></div></div>
<svg class="abs" style="left:157.5px;top:8.5px" width="13" height="13" viewBox="0 0 13 13"><circle cx="6.5" cy="6.5" r="5.2" fill="#3a74c8" stroke="#62a8ec" stroke-width="1.6"/><circle cx="9" cy="3.8" r="1.3" fill="#e8f4ff"/></svg>
<div class="abs" style="left:197px;top:5px;color:#c8d8f4;font-size:12px;font-weight:bold;letter-spacing:-1px">&rsaquo;&rsaquo;</div>
<div class="abs" style="left:215px;top:3px;width:155.5px;height:24px;border-radius:3px;background:linear-gradient(#5a90ec,#4a80e0);"></div>
<svg class="abs" style="left:222px;top:9px" width="18" height="12"><path d="M1 11 L5 3 L9 8 L12 5 L17 11 Z" fill="#9ad04a"/><circle cx="5" cy="4" r="2" fill="#ffd040"/></svg>
<div class="abs" style="left:244px;top:8.5px;font-size:10.6px;color:#f0f4fc;white-space:nowrap">Windows Live Messen...</div>
<div class="abs" style="left:374px;top:3px;width:159.5px;height:24px;border-radius:3px;background:linear-gradient(#2050b0,#2a5abc);"></div>
<svg class="abs" style="left:382px;top:9px" width="14" height="12" viewBox="0 0 14 12"><path d="M1 4 L6 1 L13 3 L12 9 L6 11 L2 9 Z" fill="#c8e0f8"/></svg>
<div class="abs" style="left:403.5px;top:8.5px;font-size:10.6px;color:#f0f4fc;white-space:nowrap">MOSAIQ - Medical On...</div>
<div class="abs" style="left:1132px;top:0;width:148px;height:30px;background:linear-gradient(#5aa8ec 0,#3c94e2 3px,#3490de 50%,#3a94e0);border-left:1.5px solid #2050a0;box-sizing:border-box"></div>
<svg class="abs" style="left:1125px;top:7px" width="17" height="17"><circle cx="8.5" cy="8.5" r="7.5" fill="#5aa8f0" stroke="#c8e4fc" stroke-width="1"/><path d="M10 4.5 L6 8.5 L10 12.5" stroke="#fff" stroke-width="2" fill="none"/></svg>
<svg class="abs" style="left:1145px;top:6px" width="17" height="18"><circle cx="5" cy="4" r="2.5" fill="#e8f0f8"/><rect x="2" y="7" width="6" height="9" fill="#d0e0f0"/><rect x="7" y="10" width="7" height="6" fill="#f0a040"/></svg>
<svg class="abs" style="left:1161px;top:6px" width="18" height="18"><rect x="1" y="2" width="9" height="12" fill="#d0d8e0"/><circle cx="12" cy="11" r="5" fill="#2a8a3a" stroke="#fff"/><path d="M11 8 L15 11 L11 14 Z" fill="#fff"/></svg>
<svg class="abs" style="left:1182px;top:6px" width="14" height="18"><path d="M1 2 L13 2 L13 10 Q13 15 7 17 Q1 15 1 10 Z" fill="#f4f4f4" stroke="#888"/><path d="M4 5 L7 12 L10 5" stroke="#d02020" stroke-width="2" fill="none"/></svg>
<svg class="abs" style="left:1197px;top:6px" width="17" height="18"><circle cx="8" cy="8" r="6.5" fill="#2a3a4a"/><path d="M4 5 Q8 2 12 6" stroke="#f0c040" stroke-width="1.5" fill="none"/><path d="M8 9 L14 15" stroke="#8ac0f0" stroke-width="2"/></svg>
<div class="abs" style="left:1222px;top:9px;font-size:10.6px;color:#eef4fc;white-space:nowrap">12:02 PM</div>

</div>
</div>
</body></html>
